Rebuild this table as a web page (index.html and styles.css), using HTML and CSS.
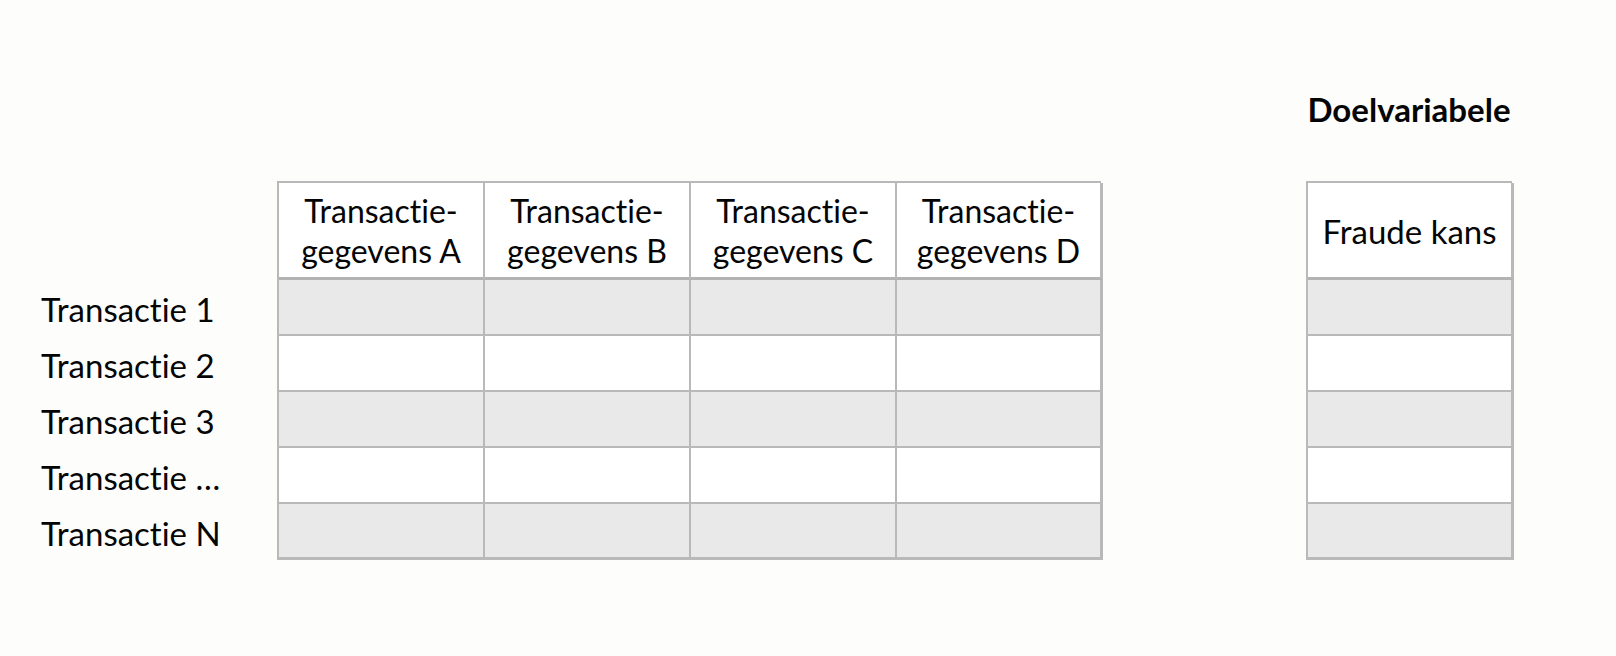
FILE: index.html
```html
<!DOCTYPE html>
<html lang="nl">
<head>
<meta charset="utf-8">
<title>Doelvariabele</title>
<link rel="stylesheet" href="styles.css">
</head>
<body>
<div class="page">
  <div class="title">Doelvariabele</div>

  <div class="labels">
    <div class="label">Transactie 1</div>
    <div class="label">Transactie 2</div>
    <div class="label">Transactie 3</div>
    <div class="label">Transactie …</div>
    <div class="label">Transactie N</div>
  </div>

  <div class="grid features">
    <div class="head">Transactie-<br>gegevens A</div>
    <div class="head">Transactie-<br>gegevens B</div>
    <div class="head">Transactie-<br>gegevens C</div>
    <div class="head">Transactie-<br>gegevens D</div>
    <div class="cell odd"></div><div class="cell odd"></div><div class="cell odd"></div><div class="cell odd"></div>
    <div class="cell"></div><div class="cell"></div><div class="cell"></div><div class="cell"></div>
    <div class="cell odd"></div><div class="cell odd"></div><div class="cell odd"></div><div class="cell odd"></div>
    <div class="cell"></div><div class="cell"></div><div class="cell"></div><div class="cell"></div>
    <div class="cell odd last"></div><div class="cell odd last"></div><div class="cell odd last"></div><div class="cell odd last"></div>
  </div>

  <div class="grid target">
    <div class="head">Fraude kans</div>
    <div class="cell odd"></div>
    <div class="cell"></div>
    <div class="cell odd"></div>
    <div class="cell"></div>
    <div class="cell odd last"></div>
  </div>
</div>
</body>
</html>
```

FILE: styles.css
```css
html, body {
  margin: 0;
  padding: 0;
  background: #fdfdfc;
}

body {
  font-family: Lato, "Liberation Sans", sans-serif;
  font-variant-ligatures: none;
  color: #050505;
  width: 1616px;
  height: 656px;
  overflow: hidden;
}

.page {
  display: grid;
  grid-template-columns: 236px 824px 205px 206px;
  grid-template-rows: 181px auto;
  padding-left: 41px;
}

.title {
  grid-column: 4;
  grid-row: 1;
  font-weight: 700;
  font-size: 33px;
  text-align: center;
  padding-top: 89px;
  line-height: 40px;
  white-space: nowrap;
}

.labels {
  grid-column: 1;
  grid-row: 2;
  display: flex;
  flex-direction: column;
  padding-top: 97px;
}

.label {
  height: 56px;
  display: flex;
  align-items: center;
  font-size: 33px;
  padding-top: 5px;
  box-sizing: border-box;
  white-space: nowrap;
}

.grid {
  grid-row: 2;
  display: grid;
  border: 2px solid #b9b9b9;
  border-bottom: none;
  border-right: none;
  align-self: start;
}

.features {
  grid-column: 2;
  grid-template-columns: repeat(4, 206px);
}

.target {
  grid-column: 4;
  grid-template-columns: 206px;
}

.head {
  height: 97px;
  box-sizing: border-box;
  border-right: 2px solid #b9b9b9;
  border-bottom: 3px solid #b3b3b3;
  background: #fff;
  display: flex;
  align-items: center;
  justify-content: center;
  text-align: center;
  font-size: 32px;
  line-height: 40px;
  padding-top: 1px;
  white-space: nowrap;
}

.target .head {
  font-size: 33px;
}

.cell {
  height: 56px;
  box-sizing: border-box;
  border-right: 2px solid #b9b9b9;
  border-bottom: 2px solid #b9b9b9;
  background: #fff;
}

.cell.odd {
  background: #e9e9e9;
}

.features .cell:nth-child(4n),
.features .head:nth-child(4),
.target .cell,
.target .head {
  border-right-width: 3px;
}

.cell.last {
  border-bottom-width: 3px;
}
```
